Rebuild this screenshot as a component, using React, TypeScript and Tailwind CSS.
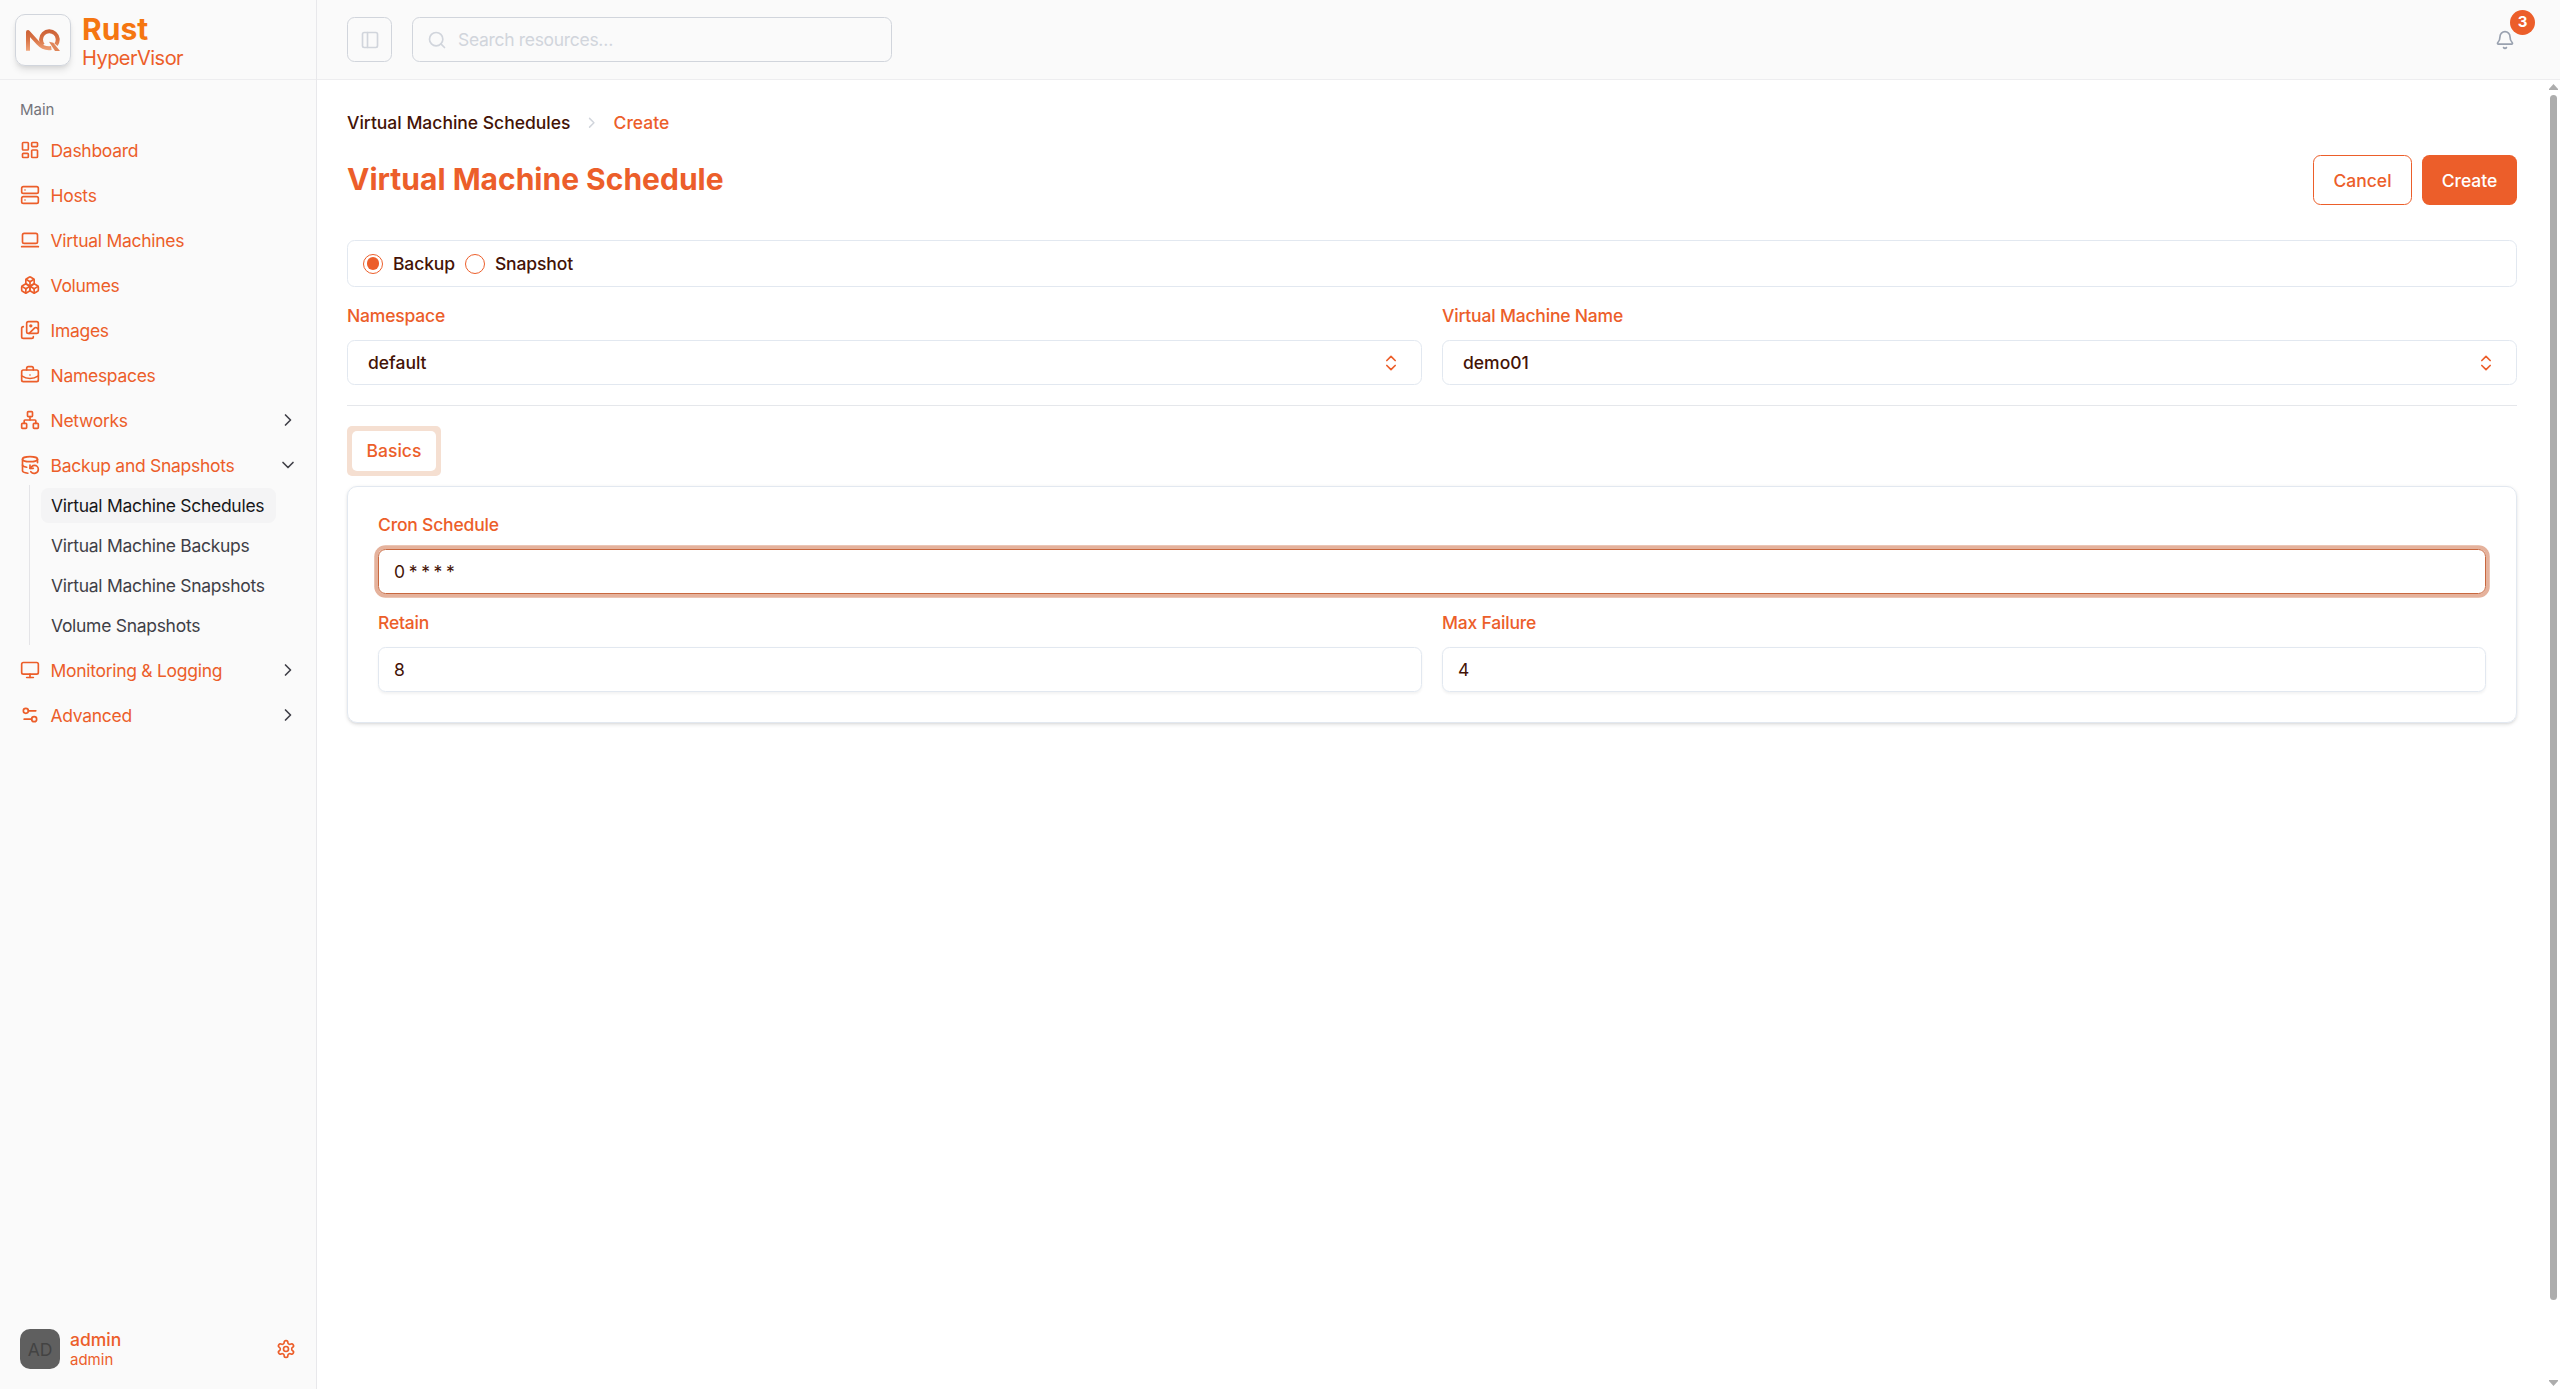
import type { ReactNode } from "react";
import {
  Bell,
  Boxes,
  BriefcaseBusiness,
  ChevronDown,
  ChevronRight,
  ChevronsUpDown,
  DatabaseBackup,
  Images,
  LaptopMinimal,
  LayoutDashboard,
  Monitor,
  Network,
  PanelLeft,
  Search,
  Server,
  Settings2,
} from "lucide-react";

const mainItems = [
  { title: "Dashboard", icon: LayoutDashboard },
  { title: "Hosts", icon: Server },
  { title: "Virtual Machines", icon: LaptopMinimal },
  { title: "Volumes", icon: Boxes },
  { title: "Images", icon: Images },
  { title: "Namespaces", icon: BriefcaseBusiness },
  { title: "Networks", icon: Network, group: true },
  {
    title: "Backup and Snapshots",
    icon: DatabaseBackup,
    group: true,
    items: [
      "Virtual Machine Schedules",
      "Virtual Machine Backups",
      "Virtual Machine Snapshots",
      "Volume Snapshots",
    ],
  },
  { title: "Monitoring & Logging", icon: Monitor, group: true },
  { title: "Advanced", icon: Settings2, group: true },
];

function Logo() {
  return (
    <svg viewBox="0 0 102 66" className="h-[17.6px] w-[27.2px]" fill="none">
      <defs>
        <linearGradient id="logo" x1="0" y1="0" x2="0" y2="66" gradientUnits="userSpaceOnUse">
          <stop offset="0" stopColor="#cb5f34" />
          <stop offset="0.5" stopColor="#d97446" />
          <stop offset="1" stopColor="#f0a67c" />
        </linearGradient>
      </defs>
      <path
        d="M6 65V9L36 42C46 53 58 60 76 57"
        stroke="url(#logo)"
        strokeWidth="12"
        strokeLinejoin="round"
      />
      <path
        d="M51 48A25 25 0 1 1 90 47"
        stroke="url(#logo)"
        strokeWidth="12"
      />
      <path d="M69 38L82 41L102 66H87Z" fill="#df8558" />
    </svg>
  );
}

function GearIcon() {
  return (
    <svg
      viewBox="0 0 24 24"
      className="size-4"
      fill="none"
      stroke="currentColor"
      strokeWidth="2"
      strokeLinecap="round"
      strokeLinejoin="round"
    >
      <path d="M12.22 2h-.44a2 2 0 0 0-2 2v.18a2 2 0 0 1-1 1.73l-.43.25a2 2 0 0 1-2 0l-.15-.08a2 2 0 0 0-2.73.73l-.22.38a2 2 0 0 0 .73 2.73l.15.1a2 2 0 0 1 1 1.72v.51a2 2 0 0 1-1 1.74l-.15.09a2 2 0 0 0-.73 2.73l.22.38a2 2 0 0 0 2.73.73l.15-.08a2 2 0 0 1 2 0l.43.25a2 2 0 0 1 1 1.73V20a2 2 0 0 0 2 2h.44a2 2 0 0 0 2-2v-.18a2 2 0 0 1 1-1.73l.43-.25a2 2 0 0 1 2 0l.15.08a2 2 0 0 0 2.73-.73l.22-.39a2 2 0 0 0-.73-2.73l-.15-.08a2 2 0 0 1-1-1.74v-.5a2 2 0 0 1 1-1.74l.15-.09a2 2 0 0 0 .73-2.73l-.22-.38a2 2 0 0 0-2.73-.73l-.15.08a2 2 0 0 1-2 0l-.43-.25a2 2 0 0 1-1-1.73V4a2 2 0 0 0-2-2z" />
      <circle cx="12" cy="12" r="3" />
    </svg>
  );
}

function Field({ label, children }: { label: string; children: ReactNode }) {
  return (
    <div className="flex min-w-0 flex-1 flex-col gap-3">
      <label className="h-[14.4px] text-sm leading-[14.4px] font-medium tracking-[-0.15px] text-[#ec5e2a]">
        {label}
      </label>
      {children}
    </div>
  );
}

function SelectBox({ value }: { value: string }) {
  return (
    <button className="flex h-9 items-center justify-between rounded-md border border-slate-200 px-4 text-sm font-medium text-orange-950">
      {value}
      <ChevronsUpDown className="size-4 text-[#ec5e2a]" />
    </button>
  );
}

function Sidebar() {
  return (
    <aside className="flex w-[253.6px] shrink-0 flex-col border-r border-[#e8e8eb] bg-[#fafafa] text-[#ec5e2a]">

      {/* BRAND */}
      <div className="flex h-16 items-center gap-[8.8px] border-b border-[#ededef] pl-3">
        <div className="flex h-[41.6px] w-[44.8px] items-center justify-center rounded-lg border border-gray-300 shadow-md">
          <Logo />
        </div>
        <div className="flex flex-col pt-1">
          <span className="text-2xl leading-[26px] font-bold text-[#f57611]">Rust</span>
          <span className="text-base leading-5 tracking-[-0.42px]">HyperVisor</span>
        </div>
      </div>

      {/* MENU */}
      <nav className="flex flex-1 flex-col p-2 pr-[6.4px]">
        <div className="flex h-8 items-center px-2 text-xs text-[#74747a]">Main</div>
        <ul className="flex flex-col gap-1 tracking-[-0.23px]">
          {mainItems.map((item) => (
            <li key={item.title}>
              <div className="flex h-8 items-center gap-[8.4px] px-2 text-sm">
                <item.icon className="size-4" />
                <span className="flex-1">{item.title}</span>
                {item.items ? (
                  <ChevronDown className="size-4 text-zinc-700" />
                ) : item.group ? (
                  <ChevronRight className="size-4 text-zinc-700" />
                ) : null}
              </div>
              {item.items && (
                <ul className="mr-4 ml-[15px] flex flex-col gap-1 border-l border-zinc-200 py-0.5 pr-2.5 pl-[9px]">
                  {item.items.map((sub, i) => (
                    <li
                      key={sub}
                      className={
                        i === 0
                          ? "flex h-7 items-center rounded-md bg-zinc-100 px-2 text-sm whitespace-nowrap text-zinc-900"
                          : "flex h-7 items-center px-2 text-sm whitespace-nowrap text-zinc-700"
                      }
                    >
                      {sub}
                    </li>
                  ))}
                </ul>
              )}
            </li>
          ))}
        </ul>
      </nav>

      {/* USER */}
      <div className="flex items-center gap-2 px-4 pb-4">
        <div className="flex size-8 items-center justify-center rounded-lg bg-[#5f5f5f] text-sm text-[#434343]">
          AD
        </div>
        <div className="-my-1 flex flex-1 flex-col pt-px">
          <span className="text-sm leading-[17px] font-medium">admin</span>
          <span className="text-xs leading-4">admin</span>
        </div>
        <GearIcon />
      </div>

    </aside>
  );
}

function Header() {
  return (
    <header className="flex h-16 shrink-0 items-center gap-4 border-b border-[#ededef] bg-[#fafafa] px-6">
      <button className="flex size-9 items-center justify-center rounded-md border border-gray-300 text-gray-300">
        <PanelLeft className="size-4" />
      </button>
      <div className="flex h-9 w-96 items-center gap-[9px] rounded-md border border-gray-300 px-[11px] text-sm tracking-[-0.25px] text-gray-300">
        <Search className="size-4" />
        Search resources…
      </div>
      <div className="relative mr-3 ml-auto text-gray-400">
        <Bell className="size-4" />
        <span className="absolute -top-4 left-3 flex size-5 items-center justify-center rounded-full bg-[#ec5e2a] text-xs font-bold text-white">
          3
        </span>
      </div>
    </header>
  );
}

function Scrollbar() {
  return (
    <div className="flex w-[10.4px] shrink-0 flex-col items-center pt-[3.2px] pb-[2.4px]">
      <svg viewBox="0 0 9 6" className="h-[4.8px] w-[7.2px] fill-[#adadad]">
        <path d="M4.5 0L9 5V6H0V5Z" />
      </svg>
      <div className="mt-1 h-[964px] w-[5.6px] rounded-full bg-[#adadad]" />
      <svg viewBox="0 0 9 6" className="mt-auto h-[4.8px] w-[7.2px] fill-[#adadad]">
        <path d="M4.5 6L9 1V0H0V1Z" />
      </svg>
    </div>
  );
}

export default function App() {
  return (
    <div className="flex h-[1111.2px] w-[2048px] overflow-hidden bg-white font-[Inter,'Liberation_Sans',sans-serif] [zoom:1.25]">
      <Sidebar />

      <div className="flex min-w-0 flex-1 flex-col">
        <Header />

        <div className="flex min-h-0 flex-1">
          <main className="flex min-w-0 flex-1 flex-col p-6">

            {/* BREADCRUMB */}
            <div className="flex h-5 items-center gap-2.5 text-sm font-medium">
              <span className="text-orange-950">Virtual Machine Schedules</span>
              <ChevronRight className="size-3.5 text-gray-300" />
              <span className="pl-[0.5px] text-[#ec5e2a]">Create</span>
            </div>

            {/* TITLE */}
            <div className="mt-4 flex h-10 items-center justify-between">
              <h1 className="text-2xl font-bold text-[#ec5e2a]">Virtual Machine Schedule</h1>
              <div className="flex gap-2">
                <button className="h-10 w-[79.2px] rounded-md border border-[#ec5e2a] text-sm font-medium text-[#ec5e2a]">
                  Cancel
                </button>
                <button className="h-10 w-[76px] rounded-md bg-[#ec5e2a] text-sm font-medium text-white">
                  Create
                </button>
              </div>
            </div>

            {/* TYPE */}
            <div className="mt-7 flex h-[37.6px] items-center gap-2 rounded-md border border-slate-200 px-3 text-sm font-medium tracking-[-0.1px] text-orange-950">
              <span className="flex size-4 items-center justify-center rounded-full border border-[#ec5e2a]">
                <span className="size-2.5 rounded-full bg-[#ec5e2a]" />
              </span>
              Backup
              <span className="size-4 rounded-full border border-[#ec5e2a]" />
              Snapshot
            </div>

            <div className="mt-4 flex gap-4">
              <Field label="Namespace">
                <SelectBox value="default" />
              </Field>
              <Field label="Virtual Machine Name">
                <SelectBox value="demo01" />
              </Field>
            </div>

            <hr className="mt-4 border-gray-200" />

            {/* TABS */}
            <div className="mt-4 flex">
              <div className="flex h-10 w-[75.2px] items-center justify-center rounded bg-[#f5dfd1] p-1">
                <div className="flex h-full w-full items-center justify-center rounded bg-white pb-px text-sm font-medium text-[#ec5e2a]">
                  Basics
                </div>
              </div>
            </div>

            <div className="mt-2 flex flex-col gap-4 rounded-lg border border-slate-200 px-6 pt-[23.2px] pb-6 shadow-sm">
              <Field label="Cron Schedule">
                <div className="flex h-9 items-center rounded-md border border-[#c8683f] px-3 text-sm tracking-[-0.5px] text-orange-950 ring-[3px] ring-[#e5b29c]">
                  0 * * * *
                </div>
              </Field>
              <div className="flex gap-4">
                <Field label="Retain">
                  <div className="flex h-9 items-center rounded-md border border-slate-200 px-3 text-sm text-orange-950 shadow-xs">
                    8
                  </div>
                </Field>
                <Field label="Max Failure">
                  <div className="flex h-9 items-center rounded-md border border-slate-200 px-3 text-sm text-orange-950 shadow-xs">
                    4
                  </div>
                </Field>
              </div>
            </div>

          </main>
          <Scrollbar />
        </div>
      </div>
    </div>
  );
}
